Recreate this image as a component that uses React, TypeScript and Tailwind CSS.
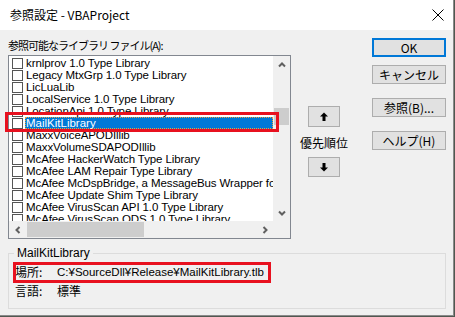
import React from "react";

const items = [
  "krnlprov 1.0 Type Library",
  "Legacy MtxGrp 1.0 Type Library",
  "LicLuaLib",
  "LocalService 1.0 Type Library",
  "LocationApi 1.0 Type Library",
  "MailKitLibrary",
  "MaxxVoiceAPODIllib",
  "MaxxVolumeSDAPODIllib",
  "McAfee HackerWatch Type Library",
  "McAfee LAM Repair Type Library",
  "McAfee McDspBridge, a MessageBus Wrapper for McAfee",
  "McAfee Update Shim Type Library",
  "McAfee VirusScan API 1.0 Type Library",
  "McAfee VirusScan ODS 1.0 Type Library",
];

const font = { fontFamily: '"Liberation Sans", "Noto Sans CJK JP", sans-serif' };
const jp = { fontFamily: '"Noto Sans CJK JP", "Liberation Sans", sans-serif' };

function Chevron({ dir }: { dir: "up" | "down" | "left" | "right" }) {
  const pts =
    dir === "up"
      ? "1,5.5 4,2.5 7,5.5"
      : dir === "down"
      ? "1,2.5 4,5.5 7,2.5"
      : dir === "left"
      ? "5.5,1 2.5,4 5.5,7"
      : "2.5,1 5.5,4 2.5,7";
  return (
    <svg width="8" height="8" viewBox="0 0 8 8">
      <polyline points={pts} fill="none" stroke="#606060" strokeWidth="2" />
    </svg>
  );
}

function Arrow({ up }: { up: boolean }) {
  return (
    <svg width="8" height="9" viewBox="0 0 8 9">
      {up ? (
        <>
          <polygon points="0,4.5 4,0.5 8,4.5" fill="#000" />
          <rect x="2.5" y="4" width="3" height="5" fill="#000" />
        </>
      ) : (
        <>
          <polygon points="0,4.5 4,8.5 8,4.5" fill="#000" />
          <rect x="2.5" y="0" width="3" height="5" fill="#000" />
        </>
      )}
    </svg>
  );
}

function Btn({ children, primary, className }: { children: React.ReactNode; primary?: boolean; className?: string }) {
  return (
    <div
      className={
        "flex h-[19px] w-[74px] items-center justify-center bg-[#e1e1e1] text-[12px] leading-[14px] text-black " +
        (primary ? "border-2 border-[#0078d7] " : "border border-[#adadad] ") +
        (className ?? "")
      }
      style={jp}
    >
      {children}
    </div>
  );
}

export default function App() {
  return (
    <div className="h-[317px] w-[455px] bg-[#505850]">
      <div className="relative flex h-[316px] w-[454px] flex-col border-r border-b border-[#8a8a8a] bg-[#f0f0f0] text-black">
        {/* Title bar */}
        <div className="flex h-[30px] items-center justify-between bg-white pl-[10px] pr-[9px]">
          <span className="text-[12px] leading-[14px]" style={jp}>
            参照設定 - VBAProject
          </span>
          <svg width="12" height="12" viewBox="0 0 12 12">
            <path d="M0.5 0.5 L11.5 11.5 M11.5 0.5 L0.5 11.5" stroke="#000" strokeWidth="1" />
          </svg>
        </div>

        {/* Body */}
        <div className="flex flex-col pl-[8px] pr-[7px]">
          <div className="flex">
            {/* Left column */}
            <div className="flex w-[283px] flex-col pt-[8px]">
              <div className="mb-[3px] h-[14px] whitespace-nowrap text-[11px] leading-[14px] tracking-[-1px]" style={jp}>
                参照可能なライブラリ ファイル(A):
              </div>
              <div className="flex h-[184px] flex-col border border-[#828790] bg-white">
                <div className="flex min-h-0 flex-1">
                  <div className="min-w-0 flex-1 overflow-hidden pt-px">
                    {items.map((t, i) => {
                      const sel = i === 5;
                      return (
                        <div key={t} className="flex h-[12px] items-center whitespace-nowrap">
                          <div className="ml-[3px] h-[11px] w-[11px] shrink-0 border border-[#555] bg-white" />
                          {sel ? (
                            <div
                              className="ml-[2px] flex h-[12px] flex-1 items-center border border-dotted border-[#e8a040] bg-[#0078d7] pl-0 text-[11.5px] leading-[12px] text-white"
                              style={font}
                            >
                              {t}
                            </div>
                          ) : (
                            <div className="ml-[3px] text-[11.5px] leading-[12px] tracking-[-0.1px]" style={font}>
                              {t}
                            </div>
                          )}
                        </div>
                      );
                    })}
                  </div>
                  {/* vertical scrollbar */}
                  <div className="flex w-[17px] shrink-0 flex-col bg-[#f0f0f0]">
                    <div className="flex h-[17px] items-center justify-center">
                      <Chevron dir="up" />
                    </div>
                    <div className="h-[35px]" />
                    <div className="mx-px h-[17px] bg-[#cdcdcd]" />
                    <div className="flex-1" />
                    <div className="flex h-[17px] items-center justify-center">
                      <Chevron dir="down" />
                    </div>
                  </div>
                </div>
                {/* horizontal scrollbar */}
                <div className="flex h-[17px] shrink-0">
                  <div className="flex flex-1 bg-[#f0f0f0]">
                    <div className="flex w-[17px] items-center justify-center">
                      <Chevron dir="left" />
                    </div>
                    <div className="my-px ml-px w-[117px] bg-[#cdcdcd]" />
                    <div className="flex-1" />
                    <div className="flex w-[17px] items-center justify-center">
                      <Chevron dir="right" />
                    </div>
                  </div>
                  <div className="w-[17px] bg-[#f0f0f0]" />
                </div>
              </div>
            </div>

            {/* Middle column */}
            <div className="ml-[7px] flex w-[52px] flex-col items-center pt-[76px]">
              <div className="flex h-[21px] w-[32px] items-center justify-center border border-[#adadad] bg-[#e1e1e1]">
                <Arrow up />
              </div>
              <div className="mt-[9px] h-[14px] whitespace-nowrap text-[12px] leading-[14px]" style={jp}>
                優先順位
              </div>
              <div className="mt-[7px] flex h-[20px] w-[32px] items-center justify-center border border-[#adadad] bg-[#e1e1e1]">
                <Arrow up={false} />
              </div>
            </div>

            {/* Right column */}
            <div className="ml-[22px] flex w-[74px] flex-col pt-[8px]">
              <Btn primary>OK</Btn>
              <Btn className="mt-[8px]">キャンセル</Btn>
              <Btn className="mt-[14px]">参照(B)...</Btn>
              <Btn className="mt-[14px]">ヘルプ(H)</Btn>
            </div>
          </div>

          {/* Group box */}
          <fieldset className="mt-[7px] h-[63px] border border-[#dcdcdc] pl-[5px]">
            <legend className="px-[3px] text-[12px] leading-[14px]" style={font}>
              MailKitLibrary
            </legend>
            <div className="mt-[5px] flex h-[14px] items-center text-[12px] leading-[14px]">
              <span className="w-[43px] shrink-0 pl-[1px]" style={jp}>
                場所:
              </span>
              <span className="whitespace-nowrap text-[11.5px]" style={font}>
                C:¥SourceDll¥Release¥MailKitLibrary.tlb
              </span>
            </div>
            <div className="mt-[5px] flex h-[14px] items-center text-[12px] leading-[14px]">
              <span className="w-[43px] shrink-0 pl-[1px]" style={jp}>
                言語:
              </span>
              <span style={jp}>標準</span>
            </div>
          </fieldset>
        </div>

        {/* Red annotation boxes */}
        <div className="pointer-events-none absolute left-[5px] top-[112px] h-[20px] w-[274px] border-[3px] border-[#e8111f]" />
        <div className="pointer-events-none absolute left-[13px] top-[262px] h-[21px] w-[258px] border-[3px] border-[#e8111f]" />
      </div>
    </div>
  );
}
